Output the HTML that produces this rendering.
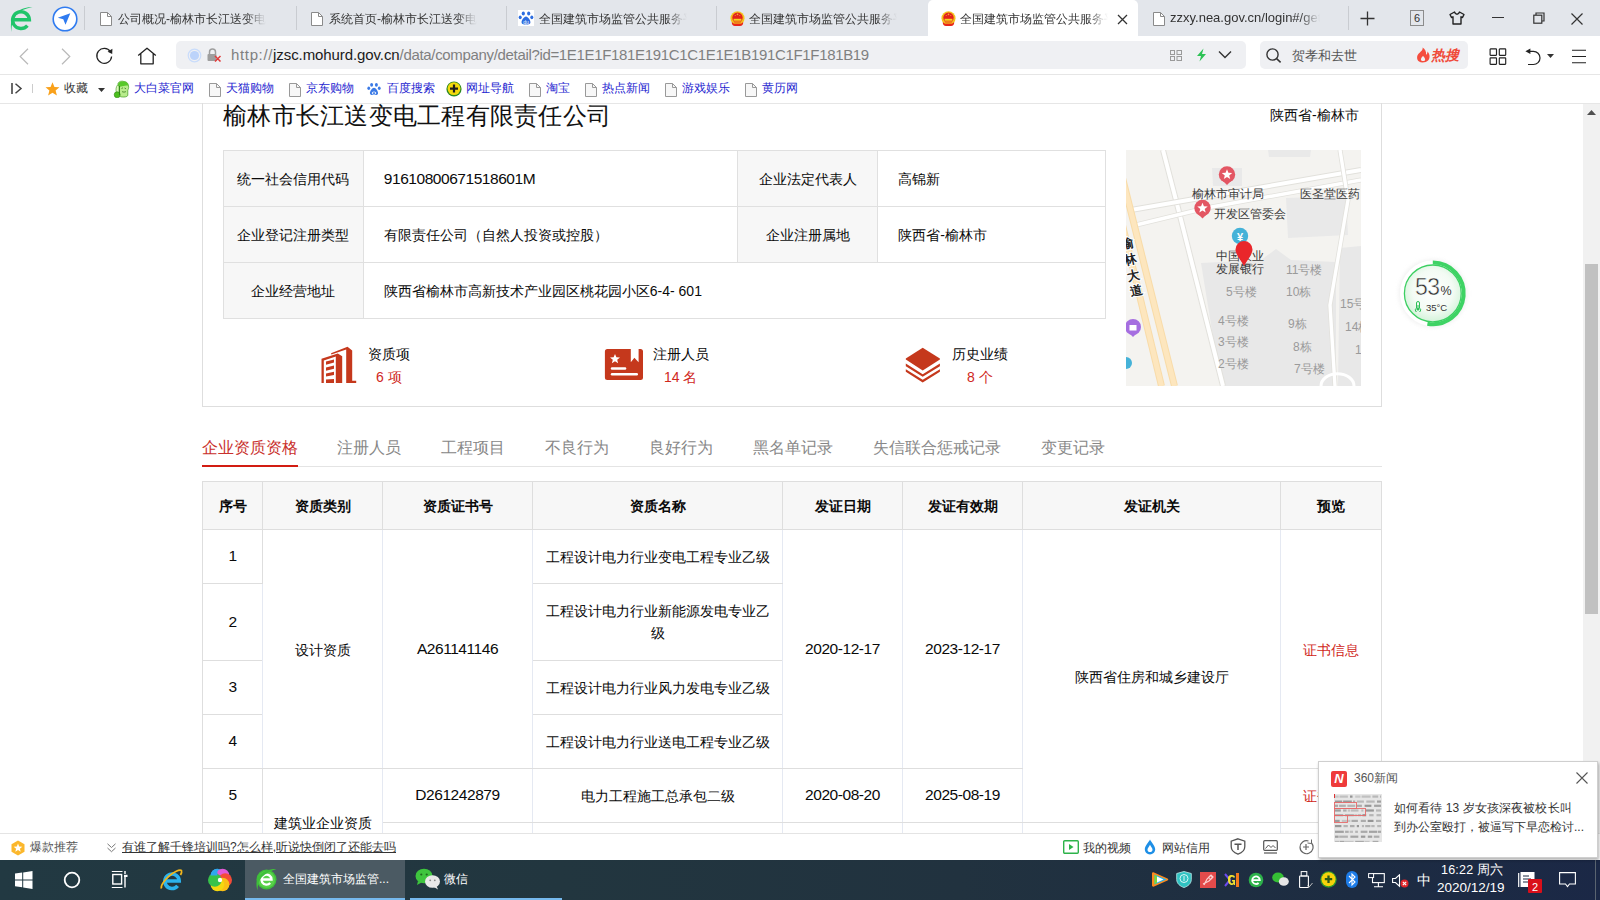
<!DOCTYPE html>
<html><head><meta charset="utf-8">
<style>
*{margin:0;padding:0;box-sizing:border-box}
html,body{width:1600px;height:900px;overflow:hidden;background:#fff;font-family:"Liberation Sans",sans-serif;color:#333}
.a{position:absolute;white-space:nowrap}
#tabbar{position:absolute;left:0;top:0;width:1600px;height:36px;background:#e3e6eb}
.tab{position:absolute;top:0;height:36px;font-size:13px;color:#333;line-height:36px}
.sep{position:absolute;top:6px;width:1px;height:24px;background:#c9ccd1}
.fade{position:absolute;top:0;height:36px;width:28px;background:linear-gradient(to right,rgba(227,230,235,0),#e3e6eb 80%)}
#addr{position:absolute;left:0;top:36px;width:1600px;height:39px;background:#fff;border-bottom:1px solid #e6e6e6}
#bm{position:absolute;left:0;top:75px;width:1600px;height:29px;background:#fff;border-bottom:1px solid #e6e6e6}
.bml{position:absolute;top:74px;line-height:29px;font-size:12px;color:#2626d0;white-space:nowrap}
#page{position:absolute;left:0;top:104px;width:1584px;height:730px;background:#fff;overflow:hidden}
#scroll{position:absolute;left:1583px;top:104px;width:17px;height:729px;background:#f1f1f1}
#status{position:absolute;left:0;top:833px;width:1600px;height:27px;background:#fff;border-top:1px solid #e4e4e4}
#task{position:absolute;left:0;top:860px;width:1600px;height:40px;background:linear-gradient(to right,#223942 0%,#22363f 35%,#21323f 60%,#1d2c42 85%,#1b2846 100%)}
</style></head><body>
<div id="tabbar"></div>
<div class="sep" style="left:84px"></div>
<svg class="a" style="left:8px;top:5px" width="26" height="28" viewBox="0 0 26 28"><path d="M6 14.8H21.4A8.4 8.4 0 1 0 19.4 20.6" fill="none" stroke="#20c46a" stroke-width="3.4"/><path d="M24.5 2.3C19 1.6 11 4 6.5 9C3.2 12.8 2.2 20 3.4 27C3.4 20.5 4.6 14 8 10C12 5.6 18 3.2 24.5 2.3Z" fill="#20c46a"/></svg>
<svg class="a" style="left:52px;top:6px" width="26" height="26" viewBox="0 0 26 26"><circle cx="13" cy="13" r="11.8" fill="#fff" stroke="#2f7bf0" stroke-width="1.6"/><path d="M18.3 7.2L5.8 11.8L11.3 13.2L13.5 18.8Z" fill="#2f7bf0"/></svg>
<svg class="a" style="left:100px;top:12px" width="12" height="14" viewBox="0 0 12 14"><path d="M0.5 0.5H7.5L11.5 4.5V13.5H0.5Z" fill="#fff" stroke="#8a8a8a" stroke-width="1"/><path d="M7.5 0.5V4.5H11.5" fill="none" stroke="#8a8a8a" stroke-width="1"/></svg><div class="a" style="left:118px;top:1px;width:148px;height:36px;overflow:hidden;font-size:12px;line-height:36px;color:#333;-webkit-mask-image:linear-gradient(to right,#000 86%,transparent 100%)">公司概况-榆林市长江送变电工程有限</div><div class="sep" style="left:296px"></div><svg class="a" style="left:311px;top:12px" width="12" height="14" viewBox="0 0 12 14"><path d="M0.5 0.5H7.5L11.5 4.5V13.5H0.5Z" fill="#fff" stroke="#8a8a8a" stroke-width="1"/><path d="M7.5 0.5V4.5H11.5" fill="none" stroke="#8a8a8a" stroke-width="1"/></svg><div class="a" style="left:329px;top:1px;width:148px;height:36px;overflow:hidden;font-size:12px;line-height:36px;color:#333;-webkit-mask-image:linear-gradient(to right,#000 86%,transparent 100%)">系统首页-榆林市长江送变电工程有限</div><div class="sep" style="left:506px"></div><svg class="a" style="left:518px;top:10px" width="16" height="16" viewBox="0 0 16 16"><rect width="16" height="16" fill="#fff"/><ellipse cx="5.3" cy="3.5" rx="1.6" ry="2" fill="#2d6de0"/><ellipse cx="10.7" cy="3.5" rx="1.6" ry="2" fill="#2d6de0"/><ellipse cx="2.2" cy="7.3" rx="1.5" ry="1.9" fill="#2d6de0"/><ellipse cx="13.8" cy="7.3" rx="1.5" ry="1.9" fill="#2d6de0"/><path d="M8 6.5C6 6.5 3.2 10.5 3.6 12.8C4 14.8 6.5 14.5 8 14.2C9.5 14.5 12 14.8 12.4 12.8C12.8 10.5 10 6.5 8 6.5Z" fill="#2d6de0"/><text x="8" y="13.6" font-size="5" fill="#fff" text-anchor="middle" font-family="Liberation Sans">du</text></svg><div class="a" style="left:539px;top:1px;width:148px;height:36px;overflow:hidden;font-size:12px;line-height:36px;color:#333;-webkit-mask-image:linear-gradient(to right,#000 86%,transparent 100%)">全国建筑市场监管公共服务平台</div><div class="sep" style="left:716px"></div><svg class="a" style="left:730px;top:11px" width="15" height="15" viewBox="0 0 15 15"><circle cx="7.5" cy="7.2" r="7" fill="#f4c21c"/><circle cx="7.5" cy="6.8" r="5.2" fill="#e3221b"/><circle cx="7.5" cy="3.4" r="0.8" fill="#f2b13a"/><circle cx="5.2" cy="4.6" r="0.5" fill="#f2b13a"/><circle cx="9.8" cy="4.6" r="0.5" fill="#f2b13a"/><rect x="3.6" y="7.8" width="7.8" height="2" fill="#f5d21e"/><rect x="4.2" y="9.8" width="6.6" height="2.6" fill="#ef7d1c"/><path d="M1.8 11C1.6 13.5 3 15 5 15H10C12 15 13.4 13.5 13.2 11L11 12.8H4Z" fill="#e8261a"/></svg><div class="a" style="left:749px;top:1px;width:148px;height:36px;overflow:hidden;font-size:12px;line-height:36px;color:#333;-webkit-mask-image:linear-gradient(to right,#000 86%,transparent 100%)">全国建筑市场监管公共服务平台</div><div class="a" style="left:928px;top:0;width:210px;height:36px;background:#fff;border-radius:5px 5px 0 0"></div><svg class="a" style="left:941px;top:11px" width="15" height="15" viewBox="0 0 15 15"><circle cx="7.5" cy="7.2" r="7" fill="#f4c21c"/><circle cx="7.5" cy="6.8" r="5.2" fill="#e3221b"/><circle cx="7.5" cy="3.4" r="0.8" fill="#f2b13a"/><circle cx="5.2" cy="4.6" r="0.5" fill="#f2b13a"/><circle cx="9.8" cy="4.6" r="0.5" fill="#f2b13a"/><rect x="3.6" y="7.8" width="7.8" height="2" fill="#f5d21e"/><rect x="4.2" y="9.8" width="6.6" height="2.6" fill="#ef7d1c"/><path d="M1.8 11C1.6 13.5 3 15 5 15H10C12 15 13.4 13.5 13.2 11L11 12.8H4Z" fill="#e8261a"/></svg><div class="a" style="left:960px;top:1px;width:148px;height:36px;overflow:hidden;font-size:12px;line-height:36px;color:#333;-webkit-mask-image:linear-gradient(to right,#000 86%,transparent 100%)">全国建筑市场监管公共服务平台</div><svg class="a" style="left:1117px;top:14px" width="11" height="11" viewBox="0 0 11 11"><path d="M1 1L10 10M10 1L1 10" stroke="#333" stroke-width="1.3"/></svg><svg class="a" style="left:1153px;top:12px" width="12" height="14" viewBox="0 0 12 14"><path d="M0.5 0.5H7.5L11.5 4.5V13.5H0.5Z" fill="#fff" stroke="#8a8a8a" stroke-width="1"/><path d="M7.5 0.5V4.5H11.5" fill="none" stroke="#8a8a8a" stroke-width="1"/></svg><div class="a" style="left:1170px;top:0;width:150px;height:36px;overflow:hidden;font-size:13px;line-height:36px;color:#333;-webkit-mask-image:linear-gradient(to right,#000 86%,transparent 100%)">zzxy.nea.gov.cn/login#/getback</div>
<div class="sep" style="left:1348px"></div>
<svg class="a" style="left:1360px;top:11px" width="15" height="15" viewBox="0 0 15 15"><path d="M7.5 0.5V14.5M0.5 7.5H14.5" stroke="#333" stroke-width="1.3"/></svg>
<div class="a" style="left:1410px;top:10px;width:14px;height:16px;border:1px solid #8c8c8c;font-size:11px;line-height:14px;text-align:center;color:#333">6</div>
<svg class="a" style="left:1449px;top:11px" width="16" height="14" viewBox="0 0 16 14"><path d="M5.5 1L1 3.5L2.5 6.5L4 5.8V13H12V5.8L13.5 6.5L15 3.5L10.5 1C10 2.5 9 3.2 8 3.2C7 3.2 6 2.5 5.5 1Z" fill="none" stroke="#222" stroke-width="1.4" stroke-linejoin="round"/></svg>
<div class="a" style="left:1492px;top:17px;width:12px;height:1px;background:#333"></div>
<svg class="a" style="left:1533px;top:12px" width="12" height="12" viewBox="0 0 12 12"><path d="M3 3V1H11V9H9" fill="none" stroke="#333" stroke-width="1.2"/><rect x="0.8" y="3.2" width="8" height="8" fill="none" stroke="#333" stroke-width="1.2"/></svg>
<svg class="a" style="left:1571px;top:13px" width="12" height="12" viewBox="0 0 12 12"><path d="M0.5 0.5L11.5 11.5M11.5 0.5L0.5 11.5" stroke="#333" stroke-width="1.2"/></svg>

<div id="addr"></div>
<svg class="a" style="left:19px;top:48px" width="10" height="17" viewBox="0 0 10 17"><path d="M9 0.8L1.2 8.5L9 16.2" fill="none" stroke="#b9b9b9" stroke-width="1.2"/></svg>
<svg class="a" style="left:61px;top:48px" width="10" height="17" viewBox="0 0 10 17"><path d="M1 0.8L8.8 8.5L1 16.2" fill="none" stroke="#b9b9b9" stroke-width="1.2"/></svg>
<svg class="a" style="left:95px;top:46px" width="19" height="19" viewBox="0 0 19 19"><path d="M15.4 5.8A7.4 7.4 0 1 0 16.6 10.5" fill="none" stroke="#222" stroke-width="1.25"/><path d="M12.6 5.8L17.4 2.8L17.2 8Z" fill="#222"/></svg>
<svg class="a" style="left:137px;top:47px" width="20" height="18" viewBox="0 0 20 18"><path d="M1.2 8.5L10 1.2L18.8 8.5M3.8 6.5V16.8H16.2V6.5" fill="none" stroke="#222" stroke-width="1.3" stroke-linejoin="round"/></svg>
<div class="a" style="left:176px;top:41px;width:1070px;height:28px;background:#eff0f3;border-radius:5px"></div>
<svg class="a" style="left:187px;top:48px" width="15" height="15" viewBox="0 0 15 15"><circle cx="7.5" cy="7.5" r="6.3" fill="none" stroke="#c9dcfb" stroke-width="1.2"/><circle cx="7.5" cy="7.5" r="4.6" fill="#bcd3fa"/></svg>
<svg class="a" style="left:206px;top:48px" width="16" height="14" viewBox="0 0 16 14"><path d="M3.5 6V4A3 3 0 0 1 9.5 4V6" fill="none" stroke="#9e9e9e" stroke-width="1.5"/><rect x="1.5" y="6" width="9" height="7" rx="1" fill="#9e9e9e"/><path d="M9 8L14.5 13.5M14.5 8L9 13.5" stroke="#e23b3b" stroke-width="1.5"/></svg>
<div class="a" style="left:231px;top:44px;font-size:15px;line-height:22px;color:#808080"><span style="letter-spacing:0.65px">http://</span><span style="color:#1a1a1a;letter-spacing:-0.09px">jzsc.mohurd.gov.cn</span><span style="letter-spacing:-0.33px">/data/company/detail?id=1E1E1F181E191C1C1E1E1B191C1F1F181B19</span></div>
<svg class="a" style="left:1170px;top:50px" width="12" height="11" viewBox="0 0 12 11"><g fill="none" stroke="#9a9a9a" stroke-width="1"><rect x="0.5" y="0.5" width="4" height="4"/><rect x="7" y="0.5" width="4.5" height="4"/><rect x="0.5" y="6.5" width="4" height="4"/><rect x="7" y="6.5" width="4.5" height="4"/></g></svg>
<svg class="a" style="left:1196px;top:48px" width="11" height="14" viewBox="0 0 11 14"><path d="M7.5 0.5L1 8H5L3.5 13.5L10 6H6Z" fill="#2cc255"/></svg>
<svg class="a" style="left:1218px;top:50px" width="14" height="9" viewBox="0 0 14 9"><path d="M1 1.5L7 7.5L13 1.5" fill="none" stroke="#333" stroke-width="1.4"/></svg>
<div class="a" style="left:1260px;top:41px;width:208px;height:28px;background:#eff0f3;border-radius:5px"></div>
<svg class="a" style="left:1266px;top:48px" width="16" height="15" viewBox="0 0 16 15"><circle cx="6.5" cy="6.5" r="5.6" fill="none" stroke="#333" stroke-width="1.4"/><path d="M10.6 10.6L14.6 14.4" stroke="#333" stroke-width="1.5"/></svg>
<div class="a" style="left:1292px;top:46px;font-size:13px;line-height:20px;color:#555">贺孝和去世</div>
<svg class="a" style="left:1416px;top:47px" width="15" height="16" viewBox="0 0 15 16"><path d="M6.5 0.5C7.5 3 4 5 2 7.5C0.2 10 0.8 15.5 6.5 15.5C11.5 15.5 14 12.5 13.5 8.5C13.2 6.5 12 5 11.5 4.5C11.5 6 11 7 10 7.8C10.5 4.5 9 2 6.5 0.5ZM7 9C8.5 10.5 9.5 12 9 13.2C8.5 14.3 5.5 14.5 5 13C4.6 11.5 6 10 7 9Z" fill="#f54d3e" fill-rule="evenodd"/></svg>
<div class="a" style="left:1431px;top:45px;font-size:14px;line-height:20px;color:#f04a3a;font-weight:bold;font-style:italic">热搜</div>
<svg class="a" style="left:1489px;top:48px" width="18" height="17" viewBox="0 0 18 17"><g fill="none" stroke="#222" stroke-width="1.15"><rect x="1.1" y="0.9" width="6.4" height="6.4" rx="0.5"/><rect x="10.3" y="0.9" width="6.4" height="6.4" rx="0.5"/><rect x="1.1" y="9.9" width="6.4" height="6.4" rx="0.5"/><rect x="10.3" y="9.9" width="6.4" height="6.4" rx="0.5"/></g></svg>
<svg class="a" style="left:1524px;top:47px" width="18" height="19" viewBox="0 0 18 19"><path d="M5.5 4.3H9.4A6.6 6.6 0 0 1 9.4 17.5H4" fill="none" stroke="#222" stroke-width="1.2"/><path d="M1.4 4.3L6.4 1.6V7Z" fill="#222"/></svg>
<svg class="a" style="left:1547px;top:54px" width="7" height="4" viewBox="0 0 7 4"><path d="M0 0H7L3.5 4Z" fill="#333"/></svg>
<svg class="a" style="left:1571px;top:49px" width="16" height="15" viewBox="0 0 16 15"><path d="M1 1.2H15M1 7.5H15M1 13.8H15" stroke="#222" stroke-width="1.1"/></svg>

<div id="bm"></div>
<svg class="a" style="left:11px;top:83px" width="12" height="11" viewBox="0 0 12 11"><path d="M1 0V11" stroke="#444" stroke-width="1.6"/><path d="M4.5 0.8L10 5.5L4.5 10.2" fill="none" stroke="#444" stroke-width="1.5"/></svg>
<div class="a" style="left:32px;top:84px;width:1px;height:9px;background:#ccc"></div>
<svg class="a" style="left:45px;top:82px" width="15" height="14" viewBox="0 0 14 13"><path d="M7 0.3L8.8 4.6L13.5 4.9L9.9 7.9L11.1 12.5L7 10L2.9 12.5L4.1 7.9L0.5 4.9L5.2 4.6Z" fill="#f9a11b"/></svg>
<div class="bml" style="left:64px;color:#333">收藏</div>
<svg class="a" style="left:98px;top:88px" width="7" height="4" viewBox="0 0 7 4"><path d="M0 0H7L3.5 4Z" fill="#333"/></svg>
<svg class="a" style="left:113px;top:80px" width="17" height="18" viewBox="0 0 17 18"><path d="M5 3.5C6 1 9 0.8 11 1.5C13.5 1.5 15.5 3.5 15.5 6C16 8 15.2 9.5 14.8 10V15.5C14 17 11 17.2 9.5 17C8 17 6.5 16.5 6 15Z" fill="#b8ec8c" stroke="#3d9a1c" stroke-width="0.7"/><path d="M5 4C6.5 1.5 9 1 11 1.8C13 1.6 15.2 3.2 15.2 5.8C14 5 12 5.5 10.5 6C9 6.5 7 6.2 6 7.5Z" fill="#58c82a"/><path d="M4.5 5C3 7 2.5 10 3.5 12.5L6 13V6Z" fill="#dff7c0" stroke="#3d9a1c" stroke-width="0.6"/><circle cx="4.2" cy="14.8" r="3" fill="#4cbf1e" stroke="#2d8a12" stroke-width="0.6"/><path d="M8.5 8.5L10 7.8M11.5 8L13 8.8M9 11.5C10 12.3 12 12.3 13 11.5" fill="none" stroke="#3a7a20" stroke-width="0.8"/><path d="M6.5 6V15" stroke="#2f7f14" stroke-width="0.9"/></svg>
<div class="bml" style="left:134px">大白菜官网</div>
<svg class="a" style="left:209px;top:83px" width="12" height="14" viewBox="0 0 12 14"><path d="M0.5 0.5H7.5L11.5 4.5V13.5H0.5Z" fill="#f7f7f7" stroke="#999" stroke-width="1"/><path d="M7.5 0.5V4.5H11.5" fill="none" stroke="#999" stroke-width="1"/></svg><div class="bml" style="left:226px">天猫购物</div><svg class="a" style="left:289px;top:83px" width="12" height="14" viewBox="0 0 12 14"><path d="M0.5 0.5H7.5L11.5 4.5V13.5H0.5Z" fill="#f7f7f7" stroke="#999" stroke-width="1"/><path d="M7.5 0.5V4.5H11.5" fill="none" stroke="#999" stroke-width="1"/></svg><div class="bml" style="left:306px">京东购物</div><svg class="a" style="left:367px;top:82px" width="14" height="14" viewBox="0 0 16 16"><ellipse cx="5.3" cy="3.2" rx="1.7" ry="2.1" fill="#3b7ae6"/><ellipse cx="10.7" cy="3.2" rx="1.7" ry="2.1" fill="#3b7ae6"/><ellipse cx="2" cy="7.2" rx="1.6" ry="2" fill="#3b7ae6"/><ellipse cx="14" cy="7.2" rx="1.6" ry="2" fill="#3b7ae6"/><path d="M8 6.5C6 6.5 3 10.5 3.4 13C3.8 15.2 6.5 15 8 14.6C9.5 15 12.2 15.2 12.6 13C13 10.5 10 6.5 8 6.5Z" fill="#3b7ae6"/><ellipse cx="8" cy="12.6" rx="2.6" ry="1.8" fill="#fff"/><ellipse cx="8" cy="12.6" rx="1.6" ry="1" fill="#3b7ae6"/></svg><div class="bml" style="left:387px">百度搜索</div><svg class="a" style="left:446px;top:81px" width="16" height="16" viewBox="0 0 16 16"><circle cx="8" cy="8" r="7.6" fill="#2d8a22"/><circle cx="8" cy="7.6" r="6.4" fill="#f3d90c"/><path d="M8 3.6V11.6M4 7.6H12" stroke="#1d1d1d" stroke-width="2.2"/></svg><div class="bml" style="left:466px">网址导航</div><svg class="a" style="left:529px;top:83px" width="12" height="14" viewBox="0 0 12 14"><path d="M0.5 0.5H7.5L11.5 4.5V13.5H0.5Z" fill="#f7f7f7" stroke="#999" stroke-width="1"/><path d="M7.5 0.5V4.5H11.5" fill="none" stroke="#999" stroke-width="1"/></svg><div class="bml" style="left:546px">淘宝</div><svg class="a" style="left:585px;top:83px" width="12" height="14" viewBox="0 0 12 14"><path d="M0.5 0.5H7.5L11.5 4.5V13.5H0.5Z" fill="#f7f7f7" stroke="#999" stroke-width="1"/><path d="M7.5 0.5V4.5H11.5" fill="none" stroke="#999" stroke-width="1"/></svg><div class="bml" style="left:602px">热点新闻</div><svg class="a" style="left:665px;top:83px" width="12" height="14" viewBox="0 0 12 14"><path d="M0.5 0.5H7.5L11.5 4.5V13.5H0.5Z" fill="#f7f7f7" stroke="#999" stroke-width="1"/><path d="M7.5 0.5V4.5H11.5" fill="none" stroke="#999" stroke-width="1"/></svg><div class="bml" style="left:682px">游戏娱乐</div><svg class="a" style="left:745px;top:83px" width="12" height="14" viewBox="0 0 12 14"><path d="M0.5 0.5H7.5L11.5 4.5V13.5H0.5Z" fill="#f7f7f7" stroke="#999" stroke-width="1"/><path d="M7.5 0.5V4.5H11.5" fill="none" stroke="#999" stroke-width="1"/></svg><div class="bml" style="left:762px">黄历网</div>
<div id="page"></div>

<!-- PAGE CONTENT -->
<div class="a" style="left:202px;top:103px;width:1180px;height:304px;border:1px solid #dedede;border-top:none"></div>
<div class="a" style="left:223px;top:99px;font-size:24px;color:#111;line-height:34px;letter-spacing:0.25px">榆林市长江送变电工程有限责任公司</div>
<div class="a" style="left:1270px;top:105px;font-size:14px;color:#0a0a0a;line-height:20px">陕西省-榆林市</div>
<style>
.it{position:absolute;border-collapse:collapse;font-size:14px;color:#0a0a0a}
.it td{border:1px solid #e0e0e0;height:56px;padding:2px 0 0 0}
.num{font-size:15.5px;letter-spacing:-0.45px;position:relative;top:-2px}
.it .num{top:-1px}
.it td.l{background:#f7f7f7;text-align:center}
.it td.v{padding-left:20px}
</style>
<table class="it" style="left:223px;top:150px;width:883px">
<colgroup><col style="width:140px"><col style="width:375px"><col style="width:140px"><col style="width:228px"></colgroup>
<tr><td class="l">统一社会信用代码</td><td class="v"><span class="num">91610800671518601M</span></td><td class="l">企业法定代表人</td><td class="v">高锦新</td></tr>
<tr><td class="l">企业登记注册类型</td><td class="v">有限责任公司（自然人投资或控股）</td><td class="l">企业注册属地</td><td class="v">陕西省-榆林市</td></tr>
<tr><td class="l">企业经营地址</td><td class="v" colspan="3">陕西省榆林市高新技术产业园区桃花园小区6-4- 601</td></tr>
</table>
<div id="map" class="a" style="left:1126px;top:150px;width:235px;height:236px;background:#f3f2ef;overflow:hidden"><svg width="235" height="236" viewBox="0 0 235 236" style="position:absolute;left:0;top:0;font-family:'Liberation Sans',sans-serif">
<rect width="235" height="236" fill="#f4f3f0"/>
<path d="M75 113L135 110L150 99L165 110L210 112V236H95Z" fill="#e8e8e8"/>
<path d="M160 48L220 46L222 85L162 88Z" fill="#e9e9e9"/>
<path d="M142 0H185L184 7H143Z" fill="#e9e9e9"/>
<path d="M86 18H116V36H87Z" fill="#e9e9e9"/>
<path d="M214 98L235 96V236H212Z" fill="#e8e8e8"/>

<g fill="none" stroke-linecap="butt">
<path d="M37 0L51 54L97 236" stroke="#e2e1dc" stroke-width="6"/>
<path d="M37 0L51 54L97 236" stroke="#fff" stroke-width="4"/>
<path d="M5 60L235 20" stroke="#e2e1dc" stroke-width="6"/>
<path d="M5 60L235 20" stroke="#fff" stroke-width="4"/>
<path d="M10 75L80 58L235 30" stroke="#e2e1dc" stroke-width="5"/>
<path d="M10 75L80 58L235 30" stroke="#fff" stroke-width="3.4"/>
<path d="M214 0L222 50L204 155L209 236" stroke="#e2e1dc" stroke-width="5"/>
<path d="M214 0L222 50L204 155L209 236" stroke="#fff" stroke-width="3.4"/>
<path d="M-21.7 0L35.5 236" stroke="#f8dba8" stroke-width="7"/><path d="M-21.7 0L35.5 236" stroke="#fde6be" stroke-width="5"/>
<path d="M-10.5 0L48.5 236" stroke="#f8dba8" stroke-width="7"/><path d="M-10.5 0L48.5 236" stroke="#fde6be" stroke-width="5"/>
<path d="M195 236A16 12 0 0 1 228 236" stroke="#fff" stroke-width="3"/>
</g>
<g font-size="12" fill="#3a3a3a">
<text x="66" y="48">榆林市审计局</text>
<text x="174" y="48">医圣堂医药</text>
<text x="88" y="68">开发区管委会</text>
<text x="90" y="110">中国农业</text>
<text x="90" y="123">发展银行</text>
</g>
<g font-size="12" fill="#9a9a9a">
<text x="160" y="124">11号楼</text>
<text x="100" y="146">5号楼</text>
<text x="160" y="146">10栋</text>
<text x="214" y="158">15号</text>
<text x="92" y="175">4号楼</text>
<text x="162" y="178">9栋</text>
<text x="219" y="181">14栋</text>
<text x="92" y="196">3号楼</text>
<text x="167" y="201">8栋</text>
<text x="229" y="204">1</text>
<text x="92" y="218">2号楼</text>
<text x="168" y="223">7号楼</text>
</g>
<g font-size="12.5" fill="#222" stroke="#fff" stroke-width="2" paint-order="stroke" font-weight="bold"><text transform="translate(-4 99) rotate(-12)">榆</text><text transform="translate(-1 115) rotate(-12)">林</text><text transform="translate(2 131) rotate(-12)">大</text><text transform="translate(5 146) rotate(-12)">道</text></g>
<g>
<circle cx="101" cy="24.5" r="8.2" fill="#e35663"/><path d="M96 30L101 35L106 30Z" fill="#e35663"/>
<path d="M101 19.2L102.4 22.8L106.2 23L103.2 25.4L104.2 29L101 27L97.8 29L98.8 25.4L95.8 23L99.6 22.8Z" fill="#fff"/>
<circle cx="76.5" cy="58" r="8.2" fill="#e35663"/><path d="M71.5 63.5L76.5 68.5L81.5 63.5Z" fill="#e35663"/>
<path d="M76.5 52.7L77.9 56.3L81.7 56.5L78.7 58.9L79.7 62.5L76.5 60.5L73.3 62.5L74.3 58.9L71.3 56.5L75.1 56.3Z" fill="#fff"/>
<circle cx="114" cy="86" r="8.2" fill="#45b2d8"/>
<text x="114" y="90.5" font-size="11" fill="#fff" text-anchor="middle" font-weight="bold">¥</text>
<circle cx="7" cy="177" r="8" fill="#a56ee0"/><path d="M3 183L7 187L11 183Z" fill="#a56ee0"/>
<rect x="3.5" y="175" width="7" height="5.5" fill="#fff"/>
<circle cx="0" cy="213" r="6" fill="#45b2d8"/>
<ellipse cx="121" cy="115" rx="6" ry="2" fill="rgba(0,0,0,0.25)"/>
<path d="M118 116C114 109 109.5 104 109.5 99.5A8.5 8.5 0 0 1 126.5 99.5C126.5 104 122 109 118 116Z" fill="#e9262b"/>
</g>
</svg></div>
<!-- stats -->
<svg class="a" style="left:315px;top:340px" width="50" height="50" viewBox="0 0 50 50"><g fill="#c5381c">
<path d="M16 13.2L32.5 6.8L37.2 10.5V40.8H41.2V43H31.2V9.6L16.4 14.6Z"/>
<path d="M6.5 18.8L22.8 13.4L27.2 16.2V43H20.8V16.4L8.8 20.6V43H6.5Z"/>
<path d="M11 21.6L19 19.4V22.6L11 24.8Z"/><path d="M11 27.6L19 25.6V28.8L11 30.8Z"/><path d="M11 33.4L19 31.8V35L11 36.6Z"/><path d="M11 39.4L19 39V43H11Z"/>
</g></svg>
<svg class="a" style="left:598px;top:340px" width="50" height="50" viewBox="0 0 50 50">
<path d="M9.4 8.9H32.8V22.2L36.4 17.8L40.6 22.2V8.9H42.5A2.5 2.5 0 0 1 45 11.4V37.5A2.5 2.5 0 0 1 42.5 40H9.4A2.5 2.5 0 0 1 6.9 37.5V11.4A2.5 2.5 0 0 1 9.4 8.9Z" fill="#c5381c"/>
<path d="M17 13.9L18.4 17.3L22 17.5L19.2 19.8L20.1 23.3L17 21.3L13.9 23.3L14.8 19.8L12 17.5L15.6 17.3Z" fill="#fff"/>
<rect x="12.8" y="27.2" width="15.5" height="2.5" rx="1.2" fill="#fff"/>
<rect x="12.8" y="33" width="27.2" height="2.5" rx="1.2" fill="#fff"/>
</svg>
<svg class="a" style="left:898px;top:340px" width="50" height="50" viewBox="0 0 50 50"><g fill="#c5381c">
<path d="M24.7 7.8L41.9 18.4V19.4L24.7 30.5L7.8 19.4V18.4Z"/>
<path d="M7.8 23.6L24.7 34.2L41.9 23.6V26.2L24.7 36.8L7.8 26.2Z"/>
<path d="M7.8 29.2L24.7 39.8L41.9 29.2V31.8L24.7 42.4L7.8 31.8Z"/>
</g></svg>
<div class="a" style="left:1395px;top:253px;width:80px;height:80px">
<svg width="80" height="80" viewBox="0 0 80 80" style="position:absolute;left:0;top:0">
<defs><radialGradient id="rg" cx="50%" cy="45%" r="55%"><stop offset="0%" stop-color="#ffffff"/><stop offset="65%" stop-color="#f3fbf4"/><stop offset="100%" stop-color="#d4f3da"/></radialGradient>
<filter id="sh" x="-20%" y="-20%" width="140%" height="140%"><feGaussianBlur stdDeviation="2"/></filter></defs>
<circle cx="37.8" cy="40.4" r="34" fill="#e6e6e6" filter="url(#sh)" opacity="0.6"/>
<circle cx="37.8" cy="40.4" r="32.8" fill="#fff"/>
<circle cx="37.8" cy="40.4" r="28.4" fill="url(#rg)" stroke="#3ccf62" stroke-width="1.3"/>
<path d="M37.8 9.6A30.8 30.8 0 1 1 32.4 70.7" fill="none" stroke="#3ed364" stroke-width="4"/>
</svg>
<svg class="a" style="left:18px;top:22px" width="42" height="24" viewBox="0 0 42 24"><text x="2" y="19.8" font-size="23" fill="#2e2e2e" stroke="#f8fcf8" stroke-width="0.5" letter-spacing="-0.6" font-family="Liberation Sans">53</text><text x="27.5" y="20" font-size="12.5" fill="#333" font-family="Liberation Sans">%</text></svg>
<svg class="a" style="left:19px;top:48px" width="8" height="11" viewBox="0 0 8 11"><path d="M2.5 7V2A1.5 1.5 0 0 1 5.5 2V7A2.6 2.6 0 1 1 2.5 7Z" fill="none" stroke="#2cbf56" stroke-width="1"/><circle cx="4" cy="8.2" r="1.3" fill="#2cbf56"/><path d="M4 4V8" stroke="#2cbf56" stroke-width="1"/></svg>
<div class="a" style="left:31px;top:49px;font-size:9.5px;line-height:12px;color:#333">35°C</div>
</div>

<div class="a" style="left:368px;top:344px;font-size:14px;color:#0a0a0a;line-height:20px">资质项</div>
<div class="a" style="left:376px;top:367px;font-size:14px;color:#d0281c;line-height:20px">6 项</div>
<div class="a" style="left:653px;top:344px;font-size:14px;color:#0a0a0a;line-height:20px">注册人员</div>
<div class="a" style="left:664px;top:367px;font-size:14px;color:#d0281c;line-height:20px">14 名</div>
<div class="a" style="left:952px;top:344px;font-size:14px;color:#0a0a0a;line-height:20px">历史业绩</div>
<div class="a" style="left:967px;top:367px;font-size:14px;color:#d0281c;line-height:20px">8 个</div>
<!-- tabs -->
<div class="a" style="left:202px;top:466px;width:1180px;height:1px;background:#e4e4e4"></div>
<div class="a" style="left:202px;top:465px;width:96px;height:2px;background:#d21c12"></div>
<style>.tb{position:absolute;top:436px;white-space:nowrap;font-size:16px;line-height:24px;color:#888}</style>
<div class="tb" style="left:202px;color:#c9302c">企业资质资格</div>
<div class="tb" style="left:337px">注册人员</div>
<div class="tb" style="left:441px">工程项目</div>
<div class="tb" style="left:545px">不良行为</div>
<div class="tb" style="left:649px">良好行为</div>
<div class="tb" style="left:753px">黑名单记录</div>
<div class="tb" style="left:873px">失信联合惩戒记录</div>
<div class="tb" style="left:1041px">变更记录</div>
<!-- main table -->
<style>
.mt{position:absolute;border-collapse:collapse;font-size:14px;color:#0a0a0a;table-layout:fixed}
.mt td,.mt th{border:1px solid #dedede;text-align:center;padding:3px 0 0 0}
.mt td{border-left-color:#e5e9f2;border-right-color:#e5e9f2}
.mt td.g{border-color:#dedede}
.mt tr td:last-child.p{border-right-color:#dedede}
.mt th{background:#f7f7f7;font-weight:bold;height:48px}
.mt a{color:#d0281c;text-decoration:none}
</style>
<div style="position:absolute;left:0;top:104px;width:1583px;height:729px;overflow:hidden">
<table class="mt" style="left:202px;top:377px;width:1179px">
<colgroup><col style="width:60px"><col style="width:120px"><col style="width:150px"><col style="width:250px"><col style="width:120px"><col style="width:120px"><col style="width:258px"><col style="width:101px"></colgroup>
<tr><th>序号</th><th>资质类别</th><th>资质证书号</th><th>资质名称</th><th>发证日期</th><th>发证有效期</th><th>发证机关</th><th>预览</th></tr>
<tr style="height:54px"><td class="g"><span class="num">1</span></td><td rowspan="4">设计资质</td><td rowspan="4"><span class="num">A261141146</span></td><td>工程设计电力行业变电工程专业乙级</td><td rowspan="4"><span class="num">2020-12-17</span></td><td rowspan="4"><span class="num">2023-12-17</span></td><td rowspan="5">陕西省住房和城乡建设厅</td><td rowspan="4" class="p"><a>证书信息</a></td></tr>
<tr style="height:77px"><td class="g"><span class="num">2</span></td><td style="line-height:22px;padding:0 12px">工程设计电力行业新能源发电专业乙级</td></tr>
<tr style="height:54px"><td class="g"><span class="num">3</span></td><td>工程设计电力行业风力发电专业乙级</td></tr>
<tr style="height:54px"><td class="g"><span class="num">4</span></td><td>工程设计电力行业送电工程专业乙级</td></tr>
<tr style="height:54px"><td class="g"><span class="num">5</span></td><td rowspan="2">建筑业企业资质</td><td><span class="num">D261242879</span></td><td>电力工程施工总承包二级</td><td><span class="num">2020-08-20</span></td><td><span class="num">2025-08-19</span></td><td class="p"><a>证书信息</a></td></tr>
<tr style="height:54px"><td class="g"><span class="num">6</span></td><td></td><td></td><td></td><td></td><td></td><td></td></tr>
</table>
</div>

<div id="scroll"></div>
<svg class="a" style="left:1587px;top:110px" width="9" height="5" viewBox="0 0 9 5"><path d="M0 5L4.5 0L9 5Z" fill="#505050"/></svg>
<div class="a" style="left:1585px;top:264px;width:13px;height:350px;background:#c1c1c1"></div>

<div id="status"></div>
<svg class="a" style="left:10px;top:840px" width="16" height="16" viewBox="0 0 16 16"><path d="M8 0.5L14.5 4.2V11.8L8 15.5L1.5 11.8V4.2Z" fill="#fbb72c"/><path d="M8 3.6L9.2 6.5L12.3 6.7L9.9 8.7L10.7 11.7L8 10L5.3 11.7L6.1 8.7L3.7 6.7L6.8 6.5Z" fill="#fff"/></svg>
<div class="a" style="left:30px;top:837px;font-size:12px;line-height:20px;color:#555">爆款推荐</div>
<svg class="a" style="left:107px;top:843px" width="9" height="10" viewBox="0 0 9 10"><path d="M0.5 0.8L4.5 4.5L8.5 0.8M0.5 5L4.5 8.7L8.5 5" fill="none" stroke="#777" stroke-width="1"/></svg>
<div class="a" style="left:122px;top:837px;font-size:12px;line-height:20px;color:#333;text-decoration:underline">有谁了解千锋培训吗?怎么样,听说快倒闭了还能去吗</div>
<svg class="a" style="left:1063px;top:840px" width="16" height="14" viewBox="0 0 16 14"><rect x="0.7" y="0.7" width="14.6" height="12.6" rx="1" fill="none" stroke="#2db34a" stroke-width="1.4"/><path d="M6 4V10L10.5 7Z" fill="#2db34a"/></svg>
<div class="a" style="left:1083px;top:838px;font-size:12px;line-height:20px;color:#333">我的视频</div>
<svg class="a" style="left:1144px;top:839px" width="12" height="16" viewBox="0 0 12 16"><path d="M6 0.5C4.5 3.5 0.8 7 0.8 10.3C0.8 13.3 3.2 15.5 6 15.5C8.8 15.5 11.2 13.3 11.2 10.3C11.2 7 7.5 3.5 6 0.5ZM6 5.8C5 7.8 3.5 9.2 3.5 10.8C3.5 12.2 4.6 13.1 6 13.1C7.4 13.1 8.5 12.2 8.5 10.8C8.5 9.2 7 7.8 6 5.8Z" fill="#1e8fe6" fill-rule="evenodd"/></svg>
<div class="a" style="left:1162px;top:838px;font-size:12px;line-height:20px;color:#333">网站信用</div>
<svg class="a" style="left:1230px;top:838px" width="16" height="17" viewBox="0 0 16 17"><path d="M8 0.8L14.8 3.2V8.5C14.8 12 12 14.8 8 16.2C4 14.8 1.2 12 1.2 8.5V3.2Z" fill="none" stroke="#555" stroke-width="1.3"/><path d="M4.5 6.2H11.5M8 6.2V12" stroke="#555" stroke-width="1.5"/></svg>
<svg class="a" style="left:1263px;top:840px" width="15" height="14" viewBox="0 0 15 14"><rect x="0.7" y="0.7" width="13.6" height="9.6" rx="1" fill="none" stroke="#555" stroke-width="1.2"/><path d="M2.5 8.5L5.5 5L8 7.5L10 5.5L12.5 8" fill="none" stroke="#555" stroke-width="1"/><path d="M1 13H14" stroke="#555" stroke-width="1.2"/></svg>
<svg class="a" style="left:1298px;top:839px" width="16" height="16" viewBox="0 0 16 16"><path d="M13.5 4A6.5 6.5 0 1 1 10.5 2" fill="none" stroke="#666" stroke-width="1.2"/><path d="M13.5 0.5L13.5 4.5L9.5 4" fill="none" stroke="#666" stroke-width="1"/><path d="M8 5V11M5 8H11" stroke="#666" stroke-width="1.2"/></svg>

<div id="task"></div>
<svg class="a" style="left:15px;top:871px" width="18" height="18" viewBox="0 0 18 18"><path d="M0 2.6L7.2 1.6V8.4H0ZM8.2 1.4L17.5 0V8.4H8.2ZM0 9.4H7.2V16.3L0 15.3ZM8.2 9.4H17.5V18L8.2 16.5Z" fill="#fff"/></svg>
<svg class="a" style="left:63px;top:871px" width="18" height="18" viewBox="0 0 18 18"><circle cx="9" cy="9" r="7.3" fill="none" stroke="#fff" stroke-width="1.8"/></svg>
<svg class="a" style="left:111px;top:871px" width="18" height="17" viewBox="0 0 18 17"><path d="M0.8 0.5H11.5M0.8 16.5H11.5" stroke="#fff" stroke-width="1.2"/><rect x="1.8" y="3.5" width="8.8" height="9.5" fill="none" stroke="#fff" stroke-width="1.4"/><path d="M14 0V3M14 6V16.5" stroke="#fff" stroke-width="1.4"/><rect x="13" y="3.8" width="3.5" height="2.2" fill="#fff"/></svg>
<svg class="a" style="left:157px;top:866px" width="28" height="27" viewBox="0 0 28 27"><path d="M8 15H22.2A7.2 7.2 0 1 0 20.6 19.8" fill="none" stroke="#2bb3ee" stroke-width="3.6"/><path d="M4.5 22.5A13.5 4.6 -42 0 1 24.5 4.5A13.5 4.6 -42 0 1 23.5 9" fill="none" stroke="#f2b61c" stroke-width="1.7"/></svg>
<svg class="a" style="left:207px;top:867px" width="26" height="26" viewBox="0 0 26 26"><circle cx="10.40" cy="8.50" r="6.8" fill="#2fa8ef"/><circle cx="15.60" cy="8.50" r="6.8" fill="#e25ad8"/><circle cx="18.20" cy="13.00" r="6.8" fill="#f44b38"/><circle cx="15.60" cy="17.50" r="6.8" fill="#fbbf16"/><circle cx="10.40" cy="17.50" r="6.8" fill="#f5d80e"/><circle cx="7.80" cy="13.00" r="6.8" fill="#37c24a"/><path d="M10.40 1.70A6.8 6.8 0 0 0 3.60 8.50L10.40 8.50Z" fill="#2fa8ef"/><circle cx="13" cy="13" r="2.2" fill="#fff"/></svg>
<div class="a" style="left:245px;top:860px;width:160px;height:40px;background:#4b5a63"></div>
<div class="a" style="left:245px;top:898px;width:160px;height:2px;background:#76b9ed"></div>
<div class="a" style="left:410px;top:898px;width:152px;height:2px;background:#76b9ed"></div>
<svg class="a" style="left:255px;top:867px" width="24" height="25" viewBox="0 0 24 25"><circle cx="11.5" cy="12.5" r="10" fill="#3fbf3a"/><circle cx="11.5" cy="12.5" r="8.5" fill="#59d04a"/><path d="M6.5 12.5H16.5A5 5 0 1 0 15.2 16" fill="none" stroke="#fff" stroke-width="2.4"/><path d="M21.5 2C16 1.5 7 4 3 10C1 13.5 1 19 2.5 23.5C2.5 18 4 13 7 10C10.5 6.5 16 3.5 21.5 2Z" fill="#3fbf3a"/></svg>
<div class="a" style="left:283px;top:869px;font-size:12px;line-height:20px;color:#fff">全国建筑市场监管...</div>
<svg class="a" style="left:415px;top:868px" width="26" height="22" viewBox="0 0 26 22"><ellipse cx="9" cy="8" rx="8.5" ry="7.3" fill="#3ec53e"/><path d="M3 13L2 17L6.5 14.5Z" fill="#3ec53e"/><circle cx="6.3" cy="6.5" r="1.1" fill="#1d6b1d"/><circle cx="11.7" cy="6.5" r="1.1" fill="#1d6b1d"/><ellipse cx="17.5" cy="13.5" rx="7.5" ry="6.3" fill="#e8e8e8"/><path d="M21.5 18L23 21.5L19 19Z" fill="#e8e8e8"/><circle cx="15.2" cy="12.3" r="0.9" fill="#888"/><circle cx="19.8" cy="12.3" r="0.9" fill="#888"/></svg>
<div class="a" style="left:444px;top:869px;font-size:12px;line-height:20px;color:#fff">微信</div>
<!-- tray -->
<svg class="a" style="left:1151px;top:872px" width="18" height="15" viewBox="0 0 18 15"><path d="M1 1.5C1 0.5 2 0 3 0.5L16.5 6.5C17.5 7 17.5 8 16.5 8.5L3 14.5C2 15 1 14.5 1 13.5Z" fill="#ff8a1c"/><path d="M3.5 2.5L15.5 7.5L3.5 12.5Z" fill="#21b7f4"/><path d="M6 4.5L12.5 7.5L6 10.5Z" fill="#fff"/><path d="M3.5 2.5L6 4.5V10.5L3.5 12.5Z" fill="#7bd93a"/></svg>
<svg class="a" style="left:1176px;top:871px" width="16" height="17" viewBox="0 0 16 17"><path d="M8 0.5L15.3 2.5V8.5C15.3 12.5 12 15.3 8 16.5C4 15.3 0.7 12.5 0.7 8.5V2.5Z" fill="#2fc2c2" stroke="#bfeeee" stroke-width="0.8"/><circle cx="8" cy="7.5" r="4" fill="none" stroke="#d8f6f6" stroke-width="1"/><path d="M8 5V10" stroke="#d8f6f6" stroke-width="1"/></svg>
<div class="a" style="left:1200px;top:872px;width:16px;height:16px;background:#e24b4b"></div>
<svg class="a" style="left:1201px;top:873px" width="14" height="14" viewBox="0 0 14 14"><path d="M3 12L6 6L10 2L12 4L8 8L2 11" fill="none" stroke="#fbd1d1" stroke-width="1.2"/><circle cx="9.5" cy="4.5" r="1.6" fill="none" stroke="#fbd1d1" stroke-width="1"/></svg>
<svg class="a" style="left:1224px;top:872px" width="16" height="16" viewBox="0 0 16 16"><path d="M1 2L6 8L1 14" fill="none" stroke="#6b4bf0" stroke-width="2"/><path d="M4 5.5C4.5 3.5 6 3 8 3C10 3 11 4 11 5.5H9C9 4.8 8.6 4.7 8 4.7C7 4.7 6.2 5.5 6.2 8C6.2 10.5 7 11.3 8 11.3C9 11.3 9.3 10.5 9.3 9.5H8V8H11V13H10L9.8 12.3C9.3 12.8 8.7 13 8 13C6 13 4 11.5 4 8C4 7 4 6.3 4 5.5Z" fill="#f0e030"/><rect x="12" y="1" width="3" height="14" fill="#f27a1c"/></svg>
<svg class="a" style="left:1248px;top:872px" width="16" height="16" viewBox="0 0 16 16"><circle cx="8" cy="8" r="7.3" fill="#2cb14a"/><path d="M4.2 8.2H11.8A3.8 3.8 0 1 0 10.6 11" fill="none" stroke="#fff" stroke-width="1.8"/></svg>
<svg class="a" style="left:1272px;top:872px" width="17" height="15" viewBox="0 0 17 15"><ellipse cx="6" cy="5.5" rx="5.8" ry="5" fill="#35c035"/><ellipse cx="11.8" cy="9.5" rx="5" ry="4.3" fill="#e6e6e6"/></svg>
<svg class="a" style="left:1299px;top:871px" width="14" height="18" viewBox="0 0 14 18"><rect x="2.2" y="0.6" width="5.6" height="4.4" fill="none" stroke="#fff" stroke-width="1"/><rect x="0.6" y="5" width="8.8" height="11.5" rx="0.5" fill="none" stroke="#fff" stroke-width="1.1"/><path d="M8.5 14.5L10 16.2L13.5 12" fill="none" stroke="#ccc" stroke-width="0.9"/></svg>
<svg class="a" style="left:1320px;top:871px" width="17" height="17" viewBox="0 0 17 17"><circle cx="8.5" cy="8.5" r="8.2" fill="#2f9a2a"/><circle cx="8.5" cy="8.2" r="7" fill="#f5d20b"/><path d="M8.5 4.5V12M4.8 8.2H12.2" stroke="#2b5a17" stroke-width="2.3"/></svg>
<svg class="a" style="left:1346px;top:871px" width="12" height="17" viewBox="0 0 12 17"><rect x="0" y="0" width="12" height="17" rx="6" fill="#1d7ce8"/><path d="M3 5L9 11L6 14V3L9 6L3 12" fill="none" stroke="#fff" stroke-width="1.1"/></svg>
<svg class="a" style="left:1368px;top:873px" width="17" height="15" viewBox="0 0 17 15"><rect x="4.5" y="0.6" width="11.8" height="9" fill="none" stroke="#fff" stroke-width="1.1"/><rect x="0.6" y="0.6" width="5" height="4" fill="#1d2b43" stroke="#fff" stroke-width="1"/><path d="M10.4 9.6V13.5M6 13.8H15" stroke="#fff" stroke-width="1.1"/></svg>
<svg class="a" style="left:1392px;top:874px" width="17" height="14" viewBox="0 0 17 14"><path d="M0.6 4.5H3.5L7.5 0.8V12.2L3.5 8.5H0.6Z" fill="none" stroke="#fff" stroke-width="1.1"/><circle cx="12.5" cy="9.5" r="4" fill="#e0252a"/><path d="M10.8 7.8L14.2 11.2M14.2 7.8L10.8 11.2" stroke="#fff" stroke-width="1.1"/></svg>
<div class="a" style="left:1417px;top:870px;font-size:14px;line-height:20px;color:#fff">中</div>
<div class="a" style="left:1441px;top:862px;font-size:12.5px;line-height:17px;color:#fff;letter-spacing:0.2px">16:22 周六</div>
<div class="a" style="left:1437px;top:879px;font-size:13.5px;line-height:17px;color:#fff;letter-spacing:0px">2020/12/19</div>
<svg class="a" style="left:1518px;top:871px" width="24" height="22" viewBox="0 0 24 22"><path d="M0.7 2V16" stroke="#fff" stroke-width="1.2"/><rect x="2.5" y="1" width="14" height="15" fill="#fff"/><path d="M5 5H11M5 8H13M5 11H10" stroke="#1c2a45" stroke-width="1.2"/><rect x="10" y="8" width="14" height="14" rx="1" fill="#d90f1a"/><text x="17" y="19.5" font-size="11" fill="#fff" text-anchor="middle" font-family="Liberation Sans">2</text></svg>
<svg class="a" style="left:1559px;top:872px" width="17" height="16" viewBox="0 0 17 16"><path d="M0.6 0.6H16.4V12H10.5L8.5 14.5L6.5 12H0.6Z" fill="none" stroke="#fff" stroke-width="1.1"/></svg>
<div class="a" style="left:1595px;top:860px;width:1px;height:40px;background:#5a6470"></div>

<div class="a" style="left:1318px;top:761px;width:280px;height:97px;background:#fff;border:1px solid #cfcfcf;box-shadow:1px 2px 3px rgba(0,0,0,0.3)"></div>
<div class="a" style="left:1331px;top:771px;width:16px;height:16px;background:#ee3b3b;border-radius:2px"></div>
<div class="a" style="left:1331px;top:771px;width:16px;height:16px;font-size:13px;line-height:16px;color:#fff;font-weight:bold;font-style:italic;text-align:center">N</div>
<div class="a" style="left:1354px;top:769px;font-size:12px;line-height:18px;color:#555">360新闻</div>
<svg class="a" style="left:1576px;top:772px" width="12" height="12" viewBox="0 0 12 12"><path d="M0.5 0.5L11.5 11.5M11.5 0.5L0.5 11.5" stroke="#555" stroke-width="1.1"/></svg>
<svg class="a" style="left:1334px;top:794px" width="48" height="48" viewBox="0 0 48 48"><defs><filter id="bl"><feGaussianBlur stdDeviation="0.5"/></filter></defs><rect width="48" height="48" fill="#e6e6e6"/><g filter="url(#bl)"><rect x="1.0" y="1.5" width="3.7" height="2.2" fill="rgb(189,189,189)" opacity="0.75"/><rect x="5.5" y="1.5" width="8.4" height="2.2" fill="rgb(180,180,180)" opacity="0.75"/><rect x="16.0" y="1.5" width="2.5" height="2.2" fill="rgb(121,121,121)" opacity="0.75"/><rect x="21.2" y="1.5" width="5.3" height="2.2" fill="rgb(190,190,190)" opacity="0.75"/><rect x="27.6" y="1.5" width="9.0" height="2.2" fill="rgb(180,180,180)" opacity="0.75"/><rect x="38.4" y="1.5" width="5.8" height="2.2" fill="rgb(170,170,170)" opacity="0.75"/><rect x="46.3" y="1.5" width="0.7" height="2.2" fill="rgb(139,139,139)" opacity="0.75"/><rect x="1.0" y="6.5" width="7.2" height="2.2" fill="rgb(128,128,128)" opacity="0.75"/><rect x="9.1" y="6.5" width="8.7" height="2.2" fill="rgb(125,125,125)" opacity="0.75"/><rect x="19.0" y="6.5" width="2.2" height="2.2" fill="rgb(154,154,154)" opacity="0.75"/><rect x="22.9" y="6.5" width="7.0" height="2.2" fill="rgb(169,169,169)" opacity="0.75"/><rect x="32.3" y="6.5" width="8.4" height="2.2" fill="rgb(170,170,170)" opacity="0.75"/><rect x="43.0" y="6.5" width="4.0" height="2.2" fill="rgb(137,137,137)" opacity="0.75"/><rect x="1.0" y="10.7" width="3.0" height="2.2" fill="rgb(147,147,147)" opacity="0.75"/><rect x="5.1" y="10.7" width="6.7" height="2.2" fill="rgb(158,158,158)" opacity="0.75"/><rect x="13.4" y="10.7" width="7.8" height="2.2" fill="rgb(164,164,164)" opacity="0.75"/><rect x="23.0" y="10.7" width="4.9" height="2.2" fill="rgb(149,149,149)" opacity="0.75"/><rect x="30.6" y="10.7" width="6.8" height="2.2" fill="rgb(123,123,123)" opacity="0.75"/><rect x="40.1" y="10.7" width="6.9" height="2.2" fill="rgb(140,140,140)" opacity="0.75"/><rect x="1.0" y="15.4" width="5.8" height="2.2" fill="rgb(133,133,133)" opacity="0.75"/><rect x="9.1" y="15.4" width="3.5" height="2.2" fill="rgb(154,154,154)" opacity="0.75"/><rect x="13.8" y="15.4" width="2.4" height="2.2" fill="rgb(181,181,181)" opacity="0.75"/><rect x="16.9" y="15.4" width="7.6" height="2.2" fill="rgb(172,172,172)" opacity="0.75"/><rect x="27.3" y="15.4" width="2.1" height="2.2" fill="rgb(174,174,174)" opacity="0.75"/><rect x="31.8" y="15.4" width="8.1" height="2.2" fill="rgb(125,125,125)" opacity="0.75"/><rect x="42.0" y="15.4" width="5.0" height="2.2" fill="rgb(168,168,168)" opacity="0.75"/><rect x="1.0" y="20.1" width="8.2" height="2.2" fill="rgb(155,155,155)" opacity="0.75"/><rect x="10.9" y="20.1" width="9.0" height="2.2" fill="rgb(159,159,159)" opacity="0.75"/><rect x="20.4" y="20.1" width="2.8" height="2.2" fill="rgb(188,188,188)" opacity="0.75"/><rect x="23.8" y="20.1" width="3.4" height="2.2" fill="rgb(172,172,172)" opacity="0.75"/><rect x="28.4" y="20.1" width="3.8" height="2.2" fill="rgb(125,125,125)" opacity="0.75"/><rect x="35.2" y="20.1" width="4.4" height="2.2" fill="rgb(166,166,166)" opacity="0.75"/><rect x="42.5" y="20.1" width="4.5" height="2.2" fill="rgb(168,168,168)" opacity="0.75"/><rect x="1.0" y="25.8" width="4.7" height="2.2" fill="rgb(133,133,133)" opacity="0.75"/><rect x="7.8" y="25.8" width="8.6" height="2.2" fill="rgb(184,184,184)" opacity="0.75"/><rect x="17.5" y="25.8" width="6.4" height="2.2" fill="rgb(150,150,150)" opacity="0.75"/><rect x="26.8" y="25.8" width="5.1" height="2.2" fill="rgb(153,153,153)" opacity="0.75"/><rect x="33.7" y="25.8" width="5.8" height="2.2" fill="rgb(121,121,121)" opacity="0.75"/><rect x="42.0" y="25.8" width="5.0" height="2.2" fill="rgb(160,160,160)" opacity="0.75"/><rect x="1.0" y="31.0" width="6.4" height="2.2" fill="rgb(127,127,127)" opacity="0.75"/><rect x="9.5" y="31.0" width="4.3" height="2.2" fill="rgb(165,165,165)" opacity="0.75"/><rect x="16.0" y="31.0" width="4.5" height="2.2" fill="rgb(155,155,155)" opacity="0.75"/><rect x="22.8" y="31.0" width="2.2" height="2.2" fill="rgb(127,127,127)" opacity="0.75"/><rect x="27.9" y="31.0" width="2.1" height="2.2" fill="rgb(167,167,167)" opacity="0.75"/><rect x="31.2" y="31.0" width="5.2" height="2.2" fill="rgb(160,160,160)" opacity="0.75"/><rect x="37.3" y="31.0" width="3.3" height="2.2" fill="rgb(167,167,167)" opacity="0.75"/><rect x="43.2" y="31.0" width="3.8" height="2.2" fill="rgb(168,168,168)" opacity="0.75"/><rect x="1.0" y="36.7" width="8.8" height="2.2" fill="rgb(136,136,136)" opacity="0.75"/><rect x="11.1" y="36.7" width="3.6" height="2.2" fill="rgb(154,154,154)" opacity="0.75"/><rect x="15.7" y="36.7" width="3.3" height="2.2" fill="rgb(175,175,175)" opacity="0.75"/><rect x="21.2" y="36.7" width="2.7" height="2.2" fill="rgb(161,161,161)" opacity="0.75"/><rect x="26.7" y="36.7" width="6.7" height="2.2" fill="rgb(148,148,148)" opacity="0.75"/><rect x="35.0" y="36.7" width="8.0" height="2.2" fill="rgb(141,141,141)" opacity="0.75"/><rect x="43.7" y="36.7" width="3.3" height="2.2" fill="rgb(147,147,147)" opacity="0.75"/><rect x="1.0" y="41.6" width="3.6" height="2.2" fill="rgb(135,135,135)" opacity="0.75"/><rect x="5.2" y="41.6" width="8.7" height="2.2" fill="rgb(160,160,160)" opacity="0.75"/><rect x="16.4" y="41.6" width="7.9" height="2.2" fill="rgb(143,143,143)" opacity="0.75"/><rect x="26.9" y="41.6" width="4.4" height="2.2" fill="rgb(130,130,130)" opacity="0.75"/><rect x="33.8" y="41.6" width="4.4" height="2.2" fill="rgb(136,136,136)" opacity="0.75"/><rect x="39.8" y="41.6" width="5.6" height="2.2" fill="rgb(154,154,154)" opacity="0.75"/><rect x="1.0" y="46.8" width="4.0" height="2.2" fill="rgb(172,172,172)" opacity="0.75"/><rect x="5.6" y="46.8" width="4.9" height="2.2" fill="rgb(145,145,145)" opacity="0.75"/><rect x="11.0" y="46.8" width="8.6" height="2.2" fill="rgb(185,185,185)" opacity="0.75"/><rect x="21.2" y="46.8" width="8.7" height="2.2" fill="rgb(148,148,148)" opacity="0.75"/><rect x="30.4" y="46.8" width="5.2" height="2.2" fill="rgb(186,186,186)" opacity="0.75"/><rect x="38.6" y="46.8" width="5.8" height="2.2" fill="rgb(149,149,149)" opacity="0.75"/></g><g fill="none" stroke="#e66a6a" stroke-width="0.9"><rect x="0.5" y="8.5" width="22" height="6"/><rect x="0.5" y="14.5" width="31" height="7"/><rect x="0.5" y="21.5" width="13" height="7"/></g><rect x="0" y="0" width="1" height="4" fill="#d33"/></svg>
<div class="a" style="left:1394px;top:799px;font-size:12px;line-height:19px;color:#333;letter-spacing:0.1px">如何看待 13 岁女孩深夜被校长叫</div>
<div class="a" style="left:1394px;top:818px;font-size:12px;line-height:19px;color:#333">到办公室殴打，被逼写下早恋检讨...</div>

</body></html>
